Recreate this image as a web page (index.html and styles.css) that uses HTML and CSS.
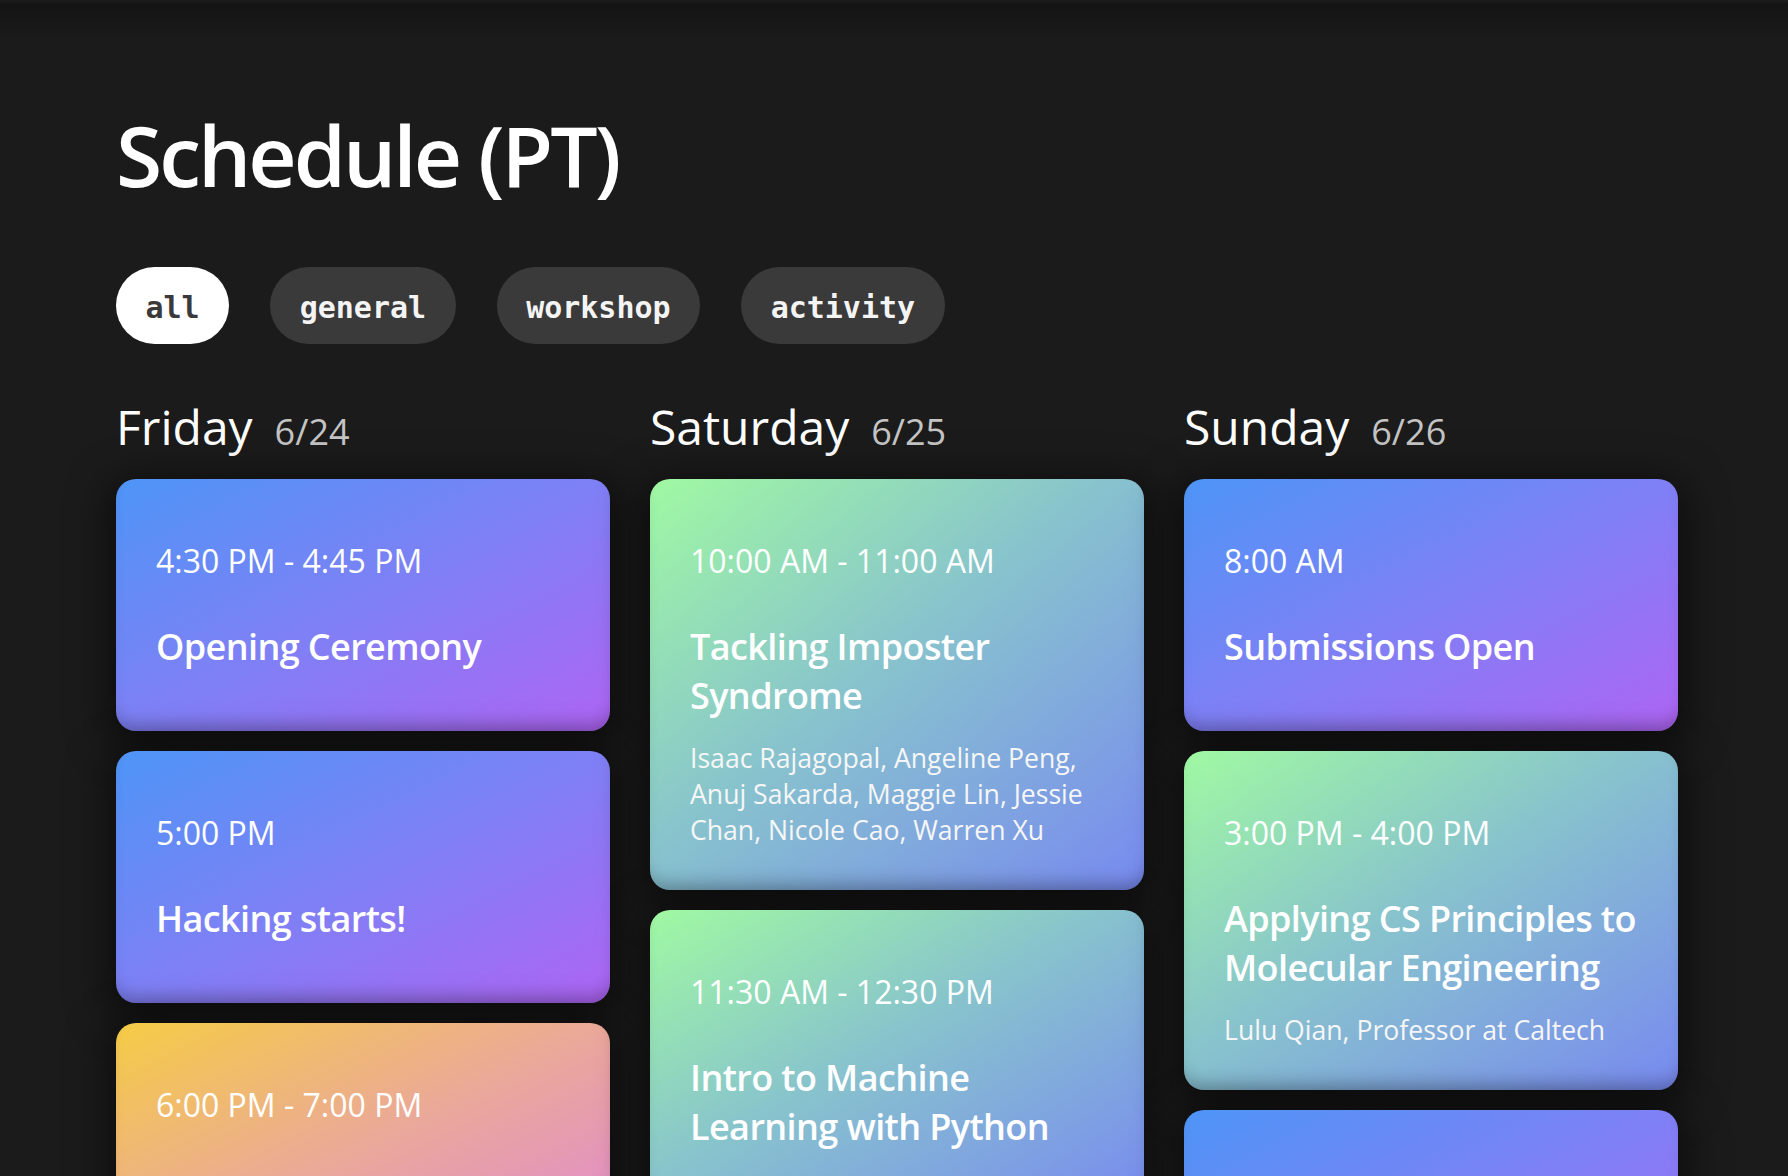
FILE: index.html
```html
<!DOCTYPE html>
<html lang="en">
<head>
<meta charset="utf-8">
<title>Schedule (PT)</title>
<link rel="stylesheet" href="styles.css">
</head>
<body>
<main class="page">
  <h1 class="title">Schedule (PT)</h1>
  <nav class="filters">
    <button class="pill pill--active">all</button>
    <button class="pill">general</button>
    <button class="pill">workshop</button>
    <button class="pill">activity</button>
  </nav>
  <div class="days">
    <section class="day">
      <h2 class="day-head"><span class="day-name">Friday</span><span class="day-date">6/24</span></h2>
      <div class="events">
        <article class="event event--general">
          <p class="event-time">4:30 PM - 4:45 PM</p>
          <h3 class="event-name">Opening Ceremony</h3>
        </article>
        <article class="event event--general">
          <p class="event-time">5:00 PM</p>
          <h3 class="event-name">Hacking starts!</h3>
        </article>
        <article class="event event--activity">
          <p class="event-time">6:00 PM - 7:00 PM</p>
          <h3 class="event-name">Team Mixer</h3>
        </article>
      </div>
    </section>
    <section class="day">
      <h2 class="day-head"><span class="day-name">Saturday</span><span class="day-date">6/25</span></h2>
      <div class="events">
        <article class="event event--workshop">
          <p class="event-time">10:00 AM - 11:00 AM</p>
          <h3 class="event-name">Tackling Imposter Syndrome</h3>
          <p class="event-speakers">Isaac Rajagopal, Angeline Peng, Anuj Sakarda, Maggie Lin, Jessie Chan, Nicole Cao, Warren Xu</p>
        </article>
        <article class="event event--workshop">
          <p class="event-time">11:30 AM - 12:30 PM</p>
          <h3 class="event-name">Intro to Machine Learning with Python</h3>
        </article>
      </div>
    </section>
    <section class="day">
      <h2 class="day-head"><span class="day-name">Sunday</span><span class="day-date">6/26</span></h2>
      <div class="events">
        <article class="event event--general">
          <p class="event-time">8:00 AM</p>
          <h3 class="event-name">Submissions Open</h3>
        </article>
        <article class="event event--workshop">
          <p class="event-time">3:00 PM - 4:00 PM</p>
          <h3 class="event-name">Applying CS Principles to Molecular Engineering</h3>
          <p class="event-speakers">Lulu Qian, Professor at Caltech</p>
        </article>
        <article class="event event--general">
          <p class="event-time">5:00 PM</p>
          <h3 class="event-name">Submissions Close</h3>
        </article>
      </div>
    </section>
  </div>
</main>
</body>
</html>
```

FILE: styles.css
```css
html {
  overflow: hidden;
}

body {
  margin: 0;
  min-height: 100vh;
  background: linear-gradient(to bottom, #1e1e1e 0, #141414 4px, #1b1b1b 40px) no-repeat #1b1b1b;
  color: #ffffff;
  font-family: "Open Sans", "Noto Sans", sans-serif;
}

.page {
  padding: 97px 0 0 116px;
}

.title {
  margin: 0;
  font-size: 84px;
  font-weight: 600;
  line-height: normal;
  letter-spacing: -3px;
}

.filters {
  display: flex;
  gap: 41px;
  margin-top: 55px;
}

.pill {
  border: none;
  border-radius: 999px;
  padding: 23px 29.5px 19px;
  background: #3a3a3a;
  color: #f4f4f4;
  font-family: "DejaVu Sans Mono", "Liberation Mono", monospace;
  font-size: 30px;
  font-weight: 700;
  line-height: 35px;
  cursor: pointer;
}

.pill--active {
  background: #ffffff;
  color: #3a3a3a;
}

.days {
  display: grid;
  grid-template-columns: repeat(3, 494px);
  column-gap: 40px;
  align-items: start;
  margin-top: 50px;
}

.day-head {
  display: flex;
  align-items: baseline;
  gap: 22px;
  margin: 0 0 20px;
  font-weight: 400;
  line-height: normal;
}

.day-name {
  font-size: 48px;
}

.day-date {
  font-size: 36px;
  color: #c4c4c4;
}

.events {
  display: flex;
  flex-direction: column;
  gap: 20px;
}

.event {
  border-radius: 20px;
  padding: 40px 34px 40px 40px;
  box-shadow: 0 8px 40px 8px rgba(0, 0, 0, 0.55), inset 0 -14px 16px -8px rgba(0, 0, 0, 0.22);
}

.event--general {
  background: linear-gradient(to bottom right, #4e95f7 0%, #7f80f5 50%, #ae65f3 100%);
}

.event--workshop {
  background: linear-gradient(to bottom right, #a0f9a2 0%, #88c4cc 45%, #788af0 100%);
}

.event--activity {
  background: linear-gradient(to bottom right, #f6cc45 0%, #eaa89a 50%, #e086d4 100%);
}

.event-time {
  margin: 20px 0 0;
  font-size: 32px;
  line-height: normal;
}

.event-name {
  margin: 40px 0 20px;
  font-size: 36px;
  font-weight: 600;
  line-height: normal;
  letter-spacing: -0.6px;
}

.event-speakers {
  margin: 0 0 2px;
  font-size: 26.6px;
  line-height: 36px;
  color: #f6f6f6;
}
```
